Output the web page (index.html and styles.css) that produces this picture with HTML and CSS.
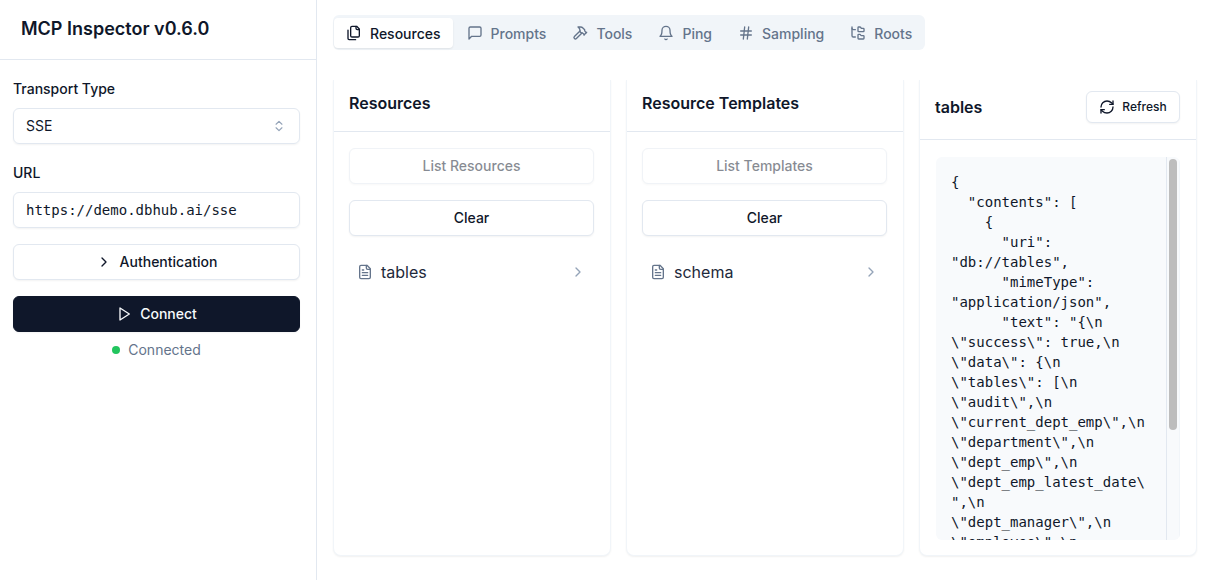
FILE: index.html
```html
<!DOCTYPE html>
<html lang="en">
<head>
<meta charset="utf-8">
<title>MCP Inspector</title>
<link rel="stylesheet" href="styles.css">
</head>
<body>
<div class="app">
  <aside class="sidebar">
    <header class="brand"><h1>MCP Inspector v0.6.0</h1></header>
    <div class="form">
      <div class="field">
        <label>Transport Type</label>
        <div class="control select"><span>SSE</span>
          <svg class="ic-sel" viewBox="0 0 24 24"><path d="m7 15 5 5 5-5"/><path d="m7 9 5-5 5 5"/></svg>
        </div>
      </div>
      <div class="field">
        <label>URL</label>
        <div class="control mono">https://demo.dbhub.ai/sse</div>
      </div>
      <button class="btn auth"><svg class="ic" viewBox="0 0 24 24"><path d="m9 18 6-6-6-6"/></svg>Authentication</button>
      <button class="btn primary"><svg class="ic" viewBox="0 0 24 24"><polygon points="6 3 20 12 6 21 6 3"/></svg>Connect</button>
      <div class="status"><span class="dot"></span>Connected</div>
    </div>
  </aside>
  <main class="main">
    <nav class="tabs">
      <a class="tab active"><svg class="ic" viewBox="0 0 24 24"><path d="M20 7h-3a2 2 0 0 1-2-2V2"/><path d="M9 18a2 2 0 0 1-2-2V4a2 2 0 0 1 2-2h7l4 4v10a2 2 0 0 1-2 2Z"/><path d="M3 7.6v12.8A1.6 1.6 0 0 0 4.6 22h9.8"/></svg>Resources</a>
      <a class="tab"><svg class="ic" viewBox="0 0 24 24"><path d="M21 15a2 2 0 0 1-2 2H7l-4 4V5a2 2 0 0 1 2-2h14a2 2 0 0 1 2 2z"/></svg>Prompts</a>
      <a class="tab"><svg class="ic" viewBox="0 0 24 24"><path d="m15 12-8.373 8.373a1 1 0 1 1-3-3L12 9"/><path d="m18 15 4-4"/><path d="m21.5 11.5-1.914-1.914A2 2 0 0 1 19 8.172V7l-2.26-2.26a6 6 0 0 0-4.202-1.756L9 2.96l.92.82A6.18 6.18 0 0 1 12 8.4V10l2 2h1.172a2 2 0 0 1 1.414.586L18.5 14.5"/></svg>Tools</a>
      <a class="tab"><svg class="ic" viewBox="0 0 24 24"><path d="M6 8a6 6 0 0 1 12 0c0 7 3 9 3 9H3s3-2 3-9"/><path d="M10.3 21a1.94 1.94 0 0 0 3.4 0"/></svg>Ping</a>
      <a class="tab"><svg class="ic" viewBox="0 0 24 24"><path d="M4 9h16"/><path d="M4 15h16"/><path d="M10 3 8 21"/><path d="M16 3l-2 18"/></svg>Sampling</a>
      <a class="tab"><svg class="ic" viewBox="0 0 24 24"><path d="M20 10a1 1 0 0 0 1-1V6a1 1 0 0 0-1-1h-2.5a1 1 0 0 1-.8-.4l-.9-1.2A1 1 0 0 0 15 3h-2a1 1 0 0 0-1 1v5a1 1 0 0 0 1 1Z"/><path d="M20 21a1 1 0 0 0 1-1v-3a1 1 0 0 0-1-1h-2.9a1 1 0 0 1-.88-.55l-.42-.85a1 1 0 0 0-.92-.6H13a1 1 0 0 0-1 1v5a1 1 0 0 0 1 1Z"/><path d="M3 5a2 2 0 0 0 2 2h3"/><path d="M3 3v13a2 2 0 0 0 2 2h3"/></svg>Roots</a>
    </nav>
    <div class="cards">
      <section class="card">
        <header class="card-head"><h2>Resources</h2></header>
        <div class="card-body">
          <button class="btn disabled">List Resources</button>
          <button class="btn">Clear</button>
          <div class="item"><svg class="ic" viewBox="0 0 24 24"><path d="M15 2H6a2 2 0 0 0-2 2v16a2 2 0 0 0 2 2h12a2 2 0 0 0 2-2V7Z"/><path d="M14 2v4a2 2 0 0 0 2 2h4"/><path d="M10 9H8"/><path d="M16 13H8"/><path d="M16 17H8"/></svg><span class="item-name">tables</span><svg class="ic chev" viewBox="0 0 24 24"><path d="m9 18 6-6-6-6"/></svg></div>
        </div>
      </section>
      <section class="card">
        <header class="card-head"><h2>Resource Templates</h2></header>
        <div class="card-body">
          <button class="btn disabled">List Templates</button>
          <button class="btn">Clear</button>
          <div class="item"><svg class="ic" viewBox="0 0 24 24"><path d="M15 2H6a2 2 0 0 0-2 2v16a2 2 0 0 0 2 2h12a2 2 0 0 0 2-2V7Z"/><path d="M14 2v4a2 2 0 0 0 2 2h4"/><path d="M10 9H8"/><path d="M16 13H8"/><path d="M16 17H8"/></svg><span class="item-name">schema</span><svg class="ic chev" viewBox="0 0 24 24"><path d="m9 18 6-6-6-6"/></svg></div>
        </div>
      </section>
      <section class="card">
        <header class="card-head detail"><h2>tables</h2>
          <button class="btn refresh"><svg class="ic" viewBox="0 0 24 24"><path d="M3 12a9 9 0 0 1 9-9 9.75 9.75 0 0 1 6.74 2.74L21 8"/><path d="M21 3v5h-5"/><path d="M21 12a9 9 0 0 1-9 9 9.75 9.75 0 0 1-6.74-2.74L3 16"/><path d="M8 16H3v5"/></svg>Refresh</button>
        </header>
        <div class="detail-body">
          <div class="viewer">
<pre class="json">{
  "contents": [
    {
      "uri": "db://tables",
      "mimeType": "application/json",
      "text": "{\n  \"success\": true,\n  \"data\": {\n    \"tables\": [\n      \"audit\",\n      \"current_dept_emp\",\n      \"department\",\n      \"dept_emp\",\n      \"dept_emp_latest_date\",\n      \"dept_manager\",\n      \"employee\",\n      \"salary\",\n      \"title\"\n    ]\n  }\n}"
    }
  ]
}</pre>
            <div class="rail"><div class="thumb"></div></div>
          </div>
        </div>
      </section>
    </div>
  </main>
</div>
</body>
</html>
```
FILE: styles.css
```css
* { box-sizing: border-box; }
html, body { margin: 0; height: 100%; background: #fff; overflow: hidden; }
body { font-family: Inter, "Liberation Sans", sans-serif; font-size: 14px; color: #0f172a; }
h1, h2 { margin: 0; }
.app { display: flex; height: 580px; }

.sidebar { width: 317px; flex: none; border-right: 1px solid #e2e8f0; }
.brand { height: 60px; padding: 0 21px 1px; display: flex; align-items: center; border-bottom: 1px solid #e2e8f0; }
.brand h1 { font-size: 18px; font-weight: 600; line-height: 28px; }
.form { padding: 19px 16px 0 13px; display: flex; flex-direction: column; }
.field { display: flex; flex-direction: column; gap: 9px; margin-bottom: 19px; }
.field label { font-size: 14px; font-weight: 500; line-height: 20px; }
.control { height: 36px; border: 1px solid #e2e8f0; border-radius: 6px; padding: 0 12px; display: flex; align-items: center; justify-content: space-between; box-shadow: 0 1px 2px rgba(0,0,0,.05); }
.select { padding-bottom: 1px; }
.mono { font-family: "DejaVu Sans Mono", monospace; font-size: 14px; }
.ic-sel { width: 14px; height: 14px; margin-right: 1px; fill: none; stroke: #94a3b8; stroke-width: 2; stroke-linecap: round; stroke-linejoin: round; }

.ic { width: 16px; height: 16px; flex: none; fill: none; stroke: currentColor; stroke-width: 2; stroke-linecap: round; stroke-linejoin: round; }

.btn { height: 36px; width: 100%; border: 1px solid #e2e8f0; border-radius: 6px; background: #fff; color: #0f172a; font: 500 14px/20px Inter, sans-serif; display: flex; align-items: center; justify-content: center; gap: 8px; padding: 0 12px; box-shadow: 0 1px 2px rgba(0,0,0,.05); }
.auth { margin-top: -3px; }
.primary { margin-top: 16px; background: #0f172a; border-color: #0f172a; color: #f8fafc; }
.disabled { opacity: .5; }
.status { margin-top: 8px; display: flex; justify-content: center; align-items: center; gap: 8px; line-height: 20px; color: #64748b; }
.dot { width: 8px; height: 8px; border-radius: 50%; background: #22c55e; }

.main { flex: 1; min-width: 0; padding: 15px 9px 24px 16px; display: flex; flex-direction: column; }
.tabs { align-self: flex-start; width: 592px; height: 35px; display: flex; align-items: flex-start; gap: 2px; padding: 3px 1px; background: #f1f5f9; border-radius: 6px; }
.tab { height: 30px; padding: 0 12px; display: flex; align-items: center; gap: 8px; font-weight: 500; color: #64748b; border-radius: 4px; }
.tab.active { background: #fff; color: #0f172a; box-shadow: 0 1px 2px rgba(0,0,0,.08); }

.cards { flex: 1; margin-top: 30px; display: grid; grid-template-columns: repeat(3, 278px); column-gap: 15px; min-height: 0; }
.card { min-height: 0; background: #fff; border: 1px solid #f1f5f9; border-top: 0; border-radius: 0 0 8px 8px; box-shadow: 0 1px 2px rgba(0,0,0,.06); display: flex; flex-direction: column; }
.card-head { height: 52px; flex: none; padding: 0 15px 6px; display: flex; align-items: center; justify-content: space-between; border-bottom: 1px solid #e2e8f0; }
.card-head.detail { height: 60px; padding-right: 16px; }
.card-head h2 { font-size: 16px; font-weight: 600; line-height: 24px; }
.card-body { padding: 16px 16px 16px 15px; display: flex; flex-direction: column; gap: 16px; }
.refresh { width: 94px; height: 32px; font-size: 12px; gap: 7px; padding: 0; }
.item { display: flex; align-items: center; gap: 8px; height: 40px; padding: 0 8px; font-size: 16px; }
.item .ic { color: #64748b; }
.item-name { flex: 1; color: #1e293b; }
.item .chev { color: #94a3b8; }

.detail-body { flex: 1; min-height: 0; padding: 17px 16px 16px; }
.viewer { display: flex; height: 383px; background: #f8fafc; border-radius: 6px; overflow: hidden; }
.json { flex: 1; min-width: 0; margin: 0; overflow: hidden; padding: 15px 15px 16px; font: 14px/20px "DejaVu Sans Mono", monospace; white-space: pre-wrap; overflow-wrap: anywhere; color: #0f172a; }
.rail { width: 14px; flex: none; padding: 2px 2px 0 2px; border-left: 1px solid #e2e8f0; border-right: 1px solid #f1f5f9; }
.thumb { width: 8px; height: 271px; border-radius: 4px; background: #bdbdbd; }
```
